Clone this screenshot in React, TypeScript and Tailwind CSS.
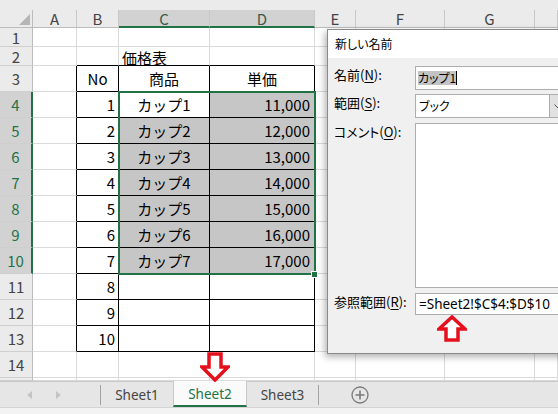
import React from 'react';

const COLS = ['A', 'B', 'C', 'D', 'E', 'F', 'G', 'H'];
const ROWS = [1, 2, 3, 4, 5, 6, 7, 8, 9, 10, 11, 12, 13, 14, 15];

function isSelected(r: number, c: string) {
  return r >= 4 && r <= 10 && (c === 'C' || c === 'D');
}

function cellClass(r: number, c: string) {
  const blackR = r >= 3 && r <= 13 && ['A', 'B', 'C', 'D'].includes(c);
  const blackB = r >= 2 && r <= 13 && ['B', 'C', 'D'].includes(c);
  const shaded = isSelected(r, c) && !(r === 4 && c === 'C');
  let align = 'justify-center items-center';
  if (c === 'B' && r >= 4) align = 'justify-end items-center pr-[3px]';
  if (c === 'D' && r >= 4) align = 'justify-end items-center pr-[4px]';
  if (r === 2) align = 'justify-start items-end pl-[3px]';
  return [
    'flex border-r border-b whitespace-nowrap text-[15px] text-black leading-none',
    align,
    blackR ? 'border-r-black' : 'border-r-[#dadada]',
    blackB ? 'border-b-black' : 'border-b-[#dadada]',
    shaded ? 'bg-[#c6c6c6]' : 'bg-white',
  ].join(' ');
}

function cellText(r: number, c: string) {
  if (r === 2 && c === 'C') return '価格表';
  if (r === 3) {
    if (c === 'B') return 'No';
    if (c === 'C') return '商品';
    if (c === 'D') return '単価';
  }
  if (r >= 4 && r <= 13 && c === 'B') return String(r - 3);
  if (r >= 4 && r <= 10 && c === 'C') return `カップ${r - 3}`;
  if (r >= 4 && r <= 10 && c === 'D') return `${r + 7},000`;
  return '';
}

function RowHeader({ r }: { r: number }) {
  const sel = r >= 4 && r <= 10;
  return (
    <div
      className={`flex items-center justify-center border-b border-b-[#cfcfcf] text-[15px] leading-none ${
        sel
          ? 'bg-[#d2d2d2] text-[#217346] border-r-2 border-r-[#217346]'
          : 'bg-[#ebebeb] text-[#444] border-r border-r-[#bcbcbc]'
      }`}
    >
      {r <= 14 ? r : ''}
    </div>
  );
}

function ColHeader({ c }: { c: string }) {
  const sel = c === 'C' || c === 'D';
  return (
    <div
      className={`flex items-center justify-center border-r border-r-[#c8c8c8] text-[15px] leading-none ${
        sel
          ? 'bg-[#d2d2d2] text-[#3c5a48] border-b-2 border-b-[#217346]'
          : 'bg-[#ebebeb] text-[#444] border-b border-b-[#bcbcbc]'
      }`}
    >
      {c === 'H' ? '' : c}
    </div>
  );
}

function Sheet() {
  return (
    <div className="grid grid-cols-[33px_44px_42px_91px_105px_41px_89px_90px_23px] grid-rows-[18px_19px_19px_repeat(12,26px)_3px]">
      <div className="relative bg-[#ebebeb] border-r border-b border-[#bcbcbc]">
        <svg className="absolute right-[2px] bottom-[2px]" width="11" height="11" viewBox="0 0 11 11">
          <polygon points="11,0 11,11 0,11" fill="#b5b5b5" />
        </svg>
      </div>
      {COLS.map(c => (
        <ColHeader key={c} c={c} />
      ))}
      {ROWS.map(r => (
        <React.Fragment key={r}>
          <RowHeader r={r} />
          {COLS.map(c => (
            <div key={c} className={cellClass(r, c)}>
              {cellText(r, c)}
            </div>
          ))}
        </React.Fragment>
      ))}
    </div>
  );
}

function TabBar() {
  return (
    <div className="font-['Noto_Sans','Open_Sans',sans-serif]">
      <div className="h-[26px] bg-[#e6e6e6] border-t border-[#c8c8c8] flex">
        <div className="w-[100px] flex items-center">
          <svg className="ml-[27px]" width="5" height="8" viewBox="0 0 5 8">
            <polygon points="5,0 5,8 0,4" fill="#c4c4c4" />
          </svg>
          <svg className="ml-[24px]" width="5" height="8" viewBox="0 0 5 8">
            <polygon points="0,0 0,8 5,4" fill="#c4c4c4" />
          </svg>
        </div>
        <div className="w-px h-[20px] self-center bg-[#a3a3a3]" />
        <div className="w-[72px] flex items-center justify-center pt-px text-[13.5px] text-[#444]">Sheet1</div>
        <div className="w-[74px] -mt-px bg-[#fafafa] border-x border-[#c8c8c8] border-b-2 border-b-[#217346] flex items-center justify-center pt-[2px] text-[13.5px] text-[#217346]">
          Sheet2
        </div>
        <div className="w-[71px] flex items-center justify-center pt-px text-[13.5px] text-[#444]">Sheet3</div>
        <div className="w-px h-[20px] self-center bg-[#a3a3a3]" />
        <div className="flex items-center pl-[32px]">
          <svg width="18" height="18" viewBox="0 0 18 18">
            <circle cx="9" cy="9" r="8" fill="none" stroke="#7a7a7a" strokeWidth="1.3" />
            <path d="M9 4.5v9M4.5 9h9" stroke="#7a7a7a" strokeWidth="1.6" />
          </svg>
        </div>
      </div>
      <div className="h-[7px] bg-[#f3f3f3] border-t border-[#d4d4d4]" />
    </div>
  );
}

function Mn({ k }: { k: string }) {
  return <span className="underline underline-offset-2">{k}</span>;
}

function NameDialog() {
  return (
    <div className="absolute left-[327px] top-[29px] w-[262px] h-[325px] bg-[#f0f0f0] border border-[#8a8a8a] shadow-[-2px_3px_7px_rgba(0,0,0,0.3)] font-['Noto_Sans_CJK_JP',sans-serif] [font-feature-settings:'palt'] text-black">
      <div className="h-[28px] bg-white flex items-center pl-[7px] text-[12px]">新しい名前</div>
      <div className="pt-[8px] pl-[6px] flex flex-col">
        <div className="flex items-start">
          <div className="w-[81px] pt-[1px] leading-[16px] text-[13px]">
            名前(<Mn k="N" />):
          </div>
          <div className="w-[152px] h-[24px] bg-white border border-[#adadad] flex items-center pl-[2px] text-[12px]">
            <span className="bg-[#c3c3c3] leading-[14px]">カップ1</span>
            <span className="w-px h-[14px] bg-black" />
          </div>
        </div>
        <div className="flex items-start mt-[4px]">
          <div className="w-[81px] pt-[1px] leading-[16px] text-[13px]">
            範囲(<Mn k="S" />):
          </div>
          <div className="w-[152px] h-[24px] bg-white border border-[#adadad] flex items-center text-[12px]">
            <span className="flex-1 pl-[3px]">ブック</span>
            <div className="w-[17px] h-full bg-[#e1e1e1] border-l border-[#adadad] flex items-center justify-center">
              <svg width="8" height="5" viewBox="0 0 8 5">
                <path d="M0.5 0.5L4 4L7.5 0.5" fill="none" stroke="#555" strokeWidth="1" />
              </svg>
            </div>
          </div>
        </div>
        <div className="flex items-start mt-[5px]">
          <div className="w-[81px] pt-[1px] leading-[16px] text-[13px]">
            コメント(<Mn k="O" />):
          </div>
          <div className="w-[152px] h-[165px] bg-white border border-[#adadad]" />
        </div>
        <div className="flex items-start mt-[5px]">
          <div className="w-[81px] pt-[1px] leading-[16px] text-[13px]">
            参照範囲(<Mn k="R" />):
          </div>
          <div className="w-[152px] h-[22px] bg-white border border-[#adadad] flex items-center pl-[3px] text-[13.5px] whitespace-nowrap font-['Noto_Sans',sans-serif] [font-feature-settings:normal]">
            =Sheet2!$C$4:$D$10
          </div>
        </div>
      </div>
    </div>
  );
}

export default function App() {
  return (
    <div className="relative w-[558px] h-[414px] overflow-hidden bg-white font-['Noto_Sans_CJK_JP',sans-serif]">
      <div className="h-[10px] bg-[#ebebeb]" />
      <Sheet />
      <TabBar />

      {/* selection C4:D10 */}
      <div className="absolute left-[118px] top-[91px] w-[198px] h-[184px] border-2 border-[#217346] pointer-events-none" />
      <div className="absolute left-[311px] top-[271px] w-[7px] h-[7px] bg-[#217346] border border-white" />

      <NameDialog />

      {/* red arrows */}
      <svg className="absolute left-[200px] top-[352px]" width="30" height="30" viewBox="0 0 30 30">
        <polygon points="9,2 21,2 21,15 28,15 15,28 2,15 9,15" fill="white" stroke="#e5101c" strokeWidth="3.5" />
      </svg>
      <svg className="absolute left-[437px] top-[315px]" width="30" height="27" viewBox="0 0 30 27">
        <polygon points="15,2 28,14 21,14 21,25 9,25 9,14 2,14" fill="white" stroke="#e5101c" strokeWidth="3.5" />
      </svg>
    </div>
  );
}
